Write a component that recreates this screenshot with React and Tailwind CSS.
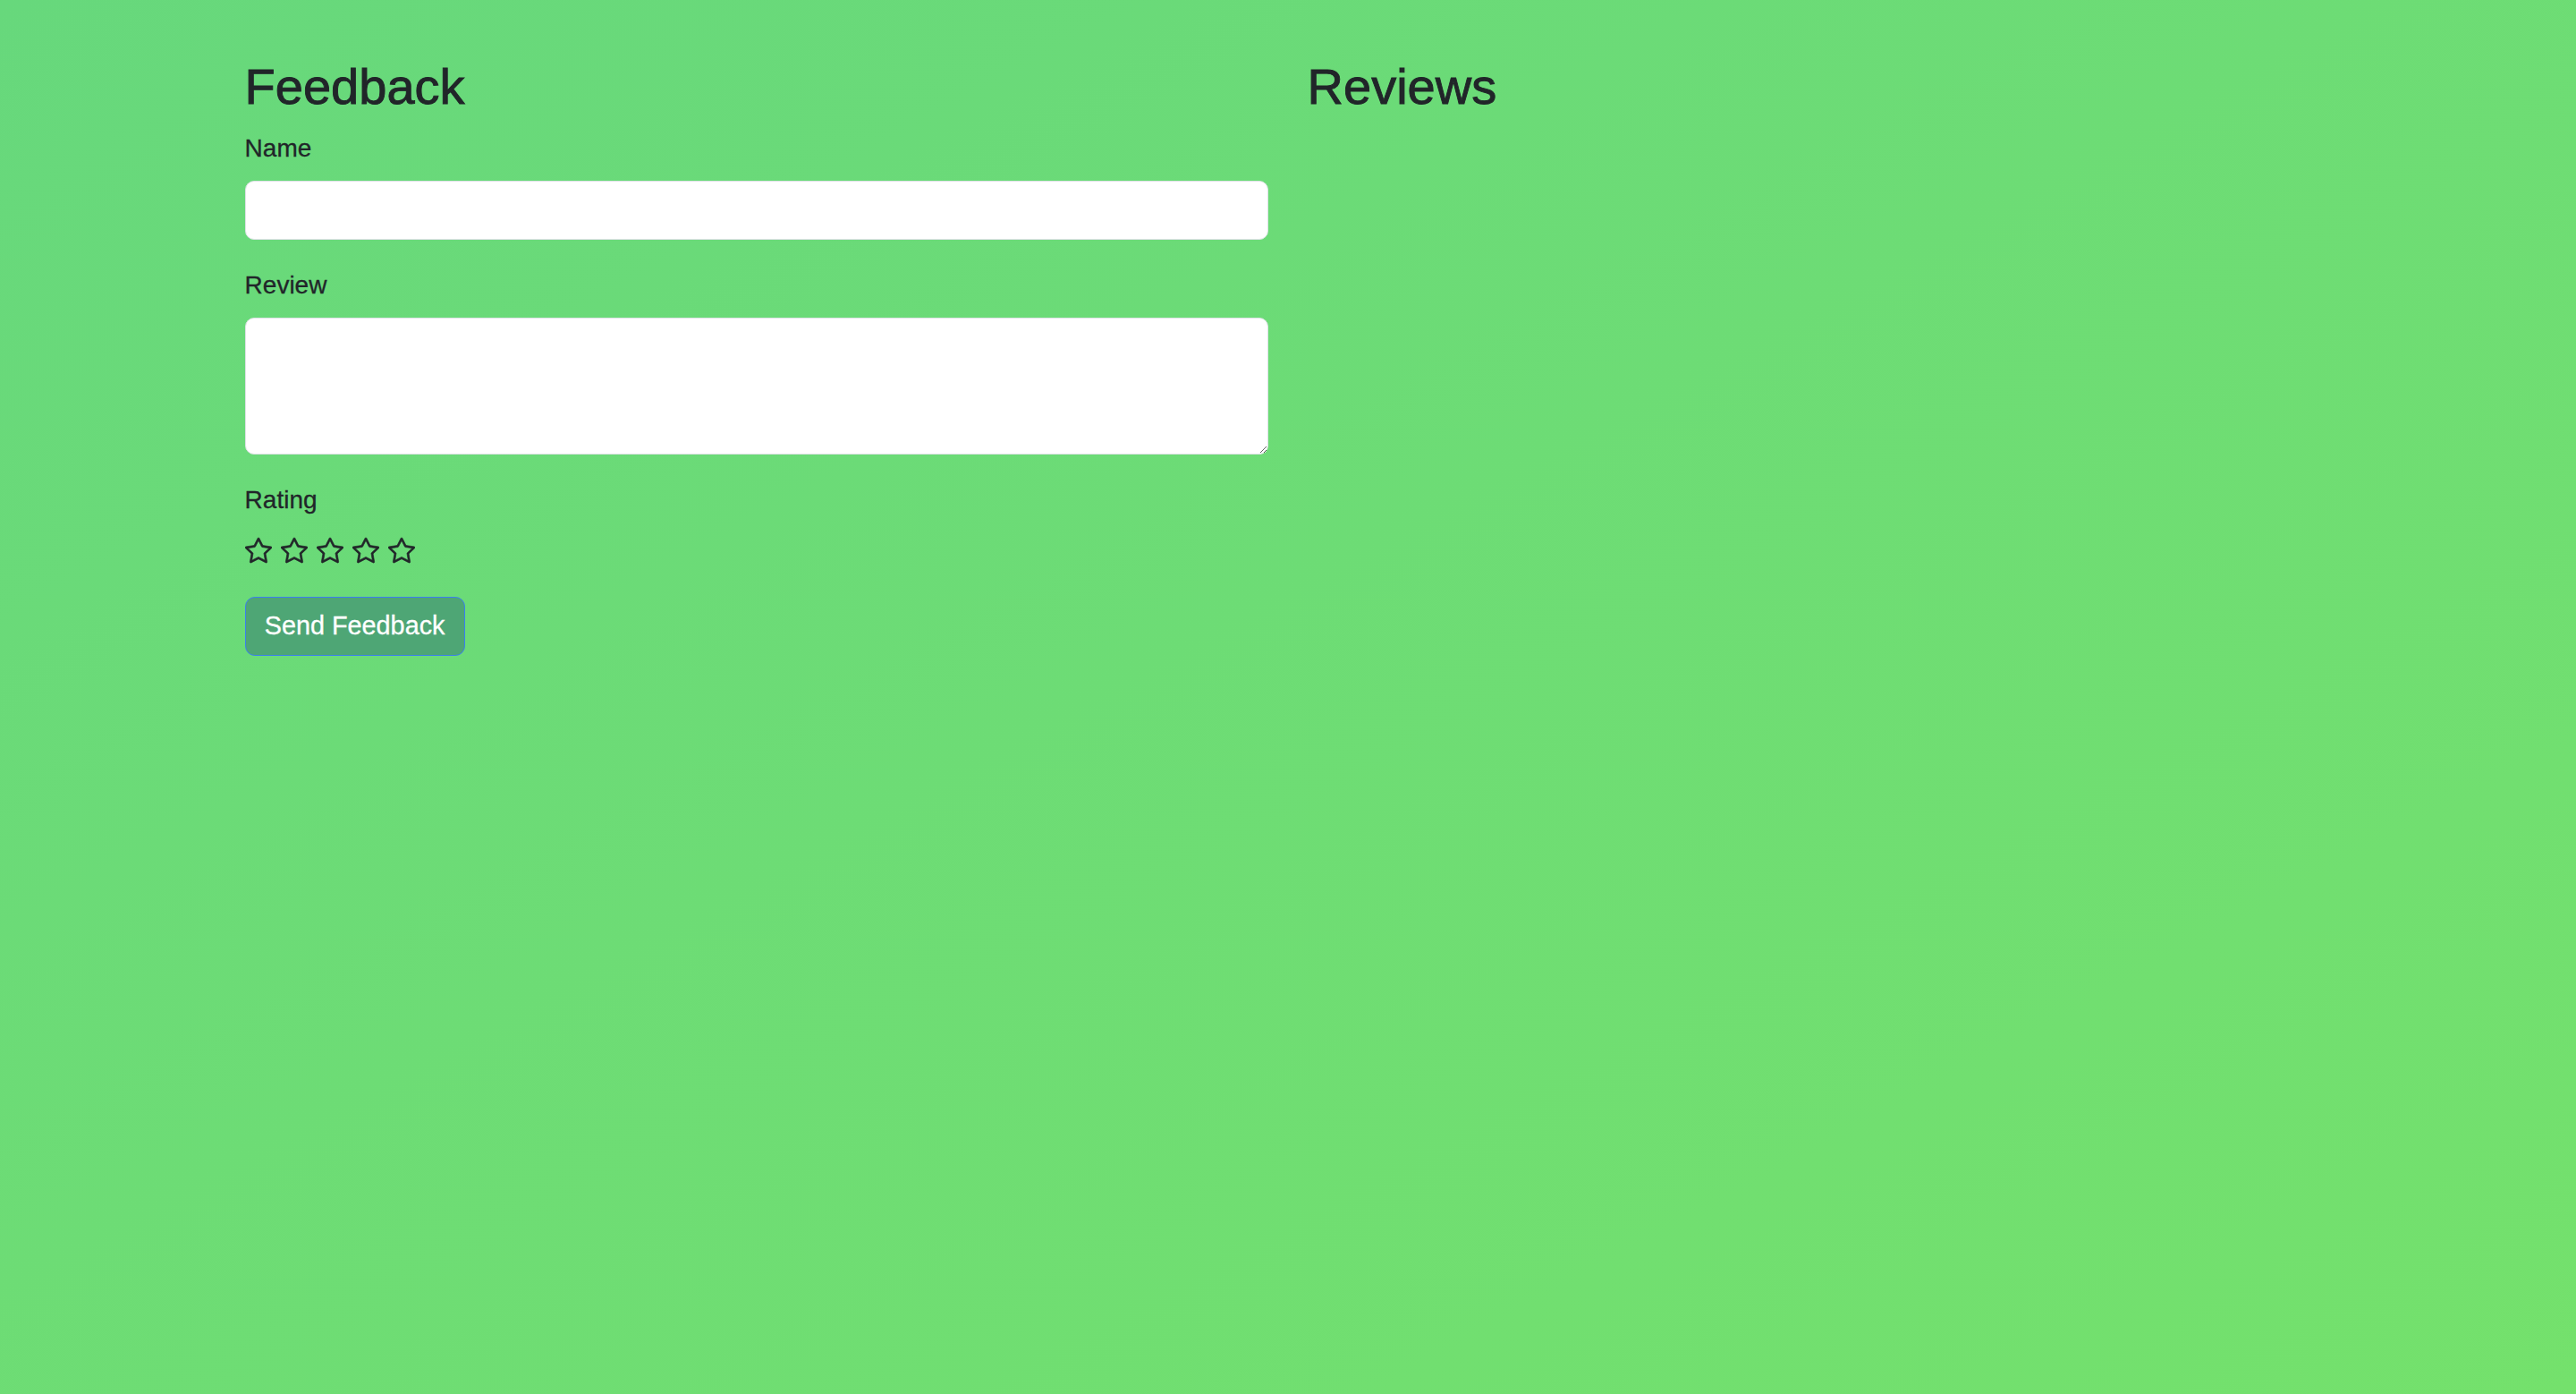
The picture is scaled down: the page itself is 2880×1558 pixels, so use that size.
import React, { useState } from 'react'

const font = { fontFamily: '"Liberation Sans", Arial, sans-serif' }

function StarIcon() {
    return (
        <svg width="30" height="30" viewBox="0 0 16 16" fill="#212529" stroke="#212529" strokeWidth="0.35" strokeLinejoin="round">
            <path d="M2.866 14.85c-.078.444.36.791.746.593l4.39-2.256 4.389 2.256c.386.198.824-.149.746-.592l-.83-4.73 3.522-3.356c.33-.314.16-.888-.282-.95l-4.898-.696L8.465.792a.513.513 0 0 0-.927 0L5.354 5.12l-4.898.696c-.441.062-.612.636-.283.95l3.523 3.356-.83 4.73zm4.905-2.767-3.686 1.894.694-3.957a.565.565 0 0 0-.163-.505L1.71 6.745l4.052-.576a.525.525 0 0 0 .393-.288L8 2.223l1.847 3.658a.525.525 0 0 0 .393.288l4.052.575-2.906 2.77a.565.565 0 0 0-.163.506l.694 3.957-3.686-1.894a.503.503 0 0 0-.461 0z" />
        </svg>
    )
}

export default function App() {
    const [name, setName] = useState('')
    const [review, setReview] = useState('')

    return (
        <div
            className="h-screen overflow-hidden w-full bg-linear-to-br from-[#67d87c] to-[#74e16c] text-[#212529] font-['Liberation_Sans',Arial,sans-serif]"
        >
            <div className="mx-auto w-[2376px] flex pt-[62px]">
                {/* feedback form */}
                <div className="w-1/2 px-[21.6px]">
                    <h2 className="text-[56px] leading-[69px] mb-[14px] [-webkit-text-stroke:0.9px_#212529]">Feedback</h2>
                    <form onSubmit={e => e.preventDefault()}>
                        <label className="block text-[28px] leading-[42px] mb-[15px] [-webkit-text-stroke:0.3px_#212529]">Name</label>
                        <input
                            type="text"
                            value={name}
                            onChange={e => setName(e.target.value)}
                            className="block w-full h-[66px] bg-white border-[1.8px] border-[#dee2e6] rounded-[10px] px-[21px] text-[28.8px] outline-none mb-[30px]"
                        />

                        <label className="block text-[28px] leading-[42px] mb-[15px] [-webkit-text-stroke:0.3px_#212529]">Review</label>
                        <textarea
                            value={review}
                            onChange={e => setReview(e.target.value)}
                            className="block w-full h-[153px] bg-white border-[1.8px] border-[#dee2e6] rounded-[10px] px-[21px] py-[10px] text-[28.8px] outline-none resize-y mb-[30px]"
                        />

                        <label className="block text-[28px] leading-[42px] [-webkit-text-stroke:0.3px_#212529]">Rating</label>
                        <div className="flex gap-[10px] mt-[20px] mb-[37px]">
                            {[1, 2, 3, 4, 5].map(i => (
                                <StarIcon key={i} />
                            ))}
                        </div>

                        <button
                            type="submit"
                            className="h-[66px] w-[246px] bg-[#4ea675] border-[1.8px] border-[#3b7ff0] rounded-[10.8px] text-white text-[28.8px] [-webkit-text-stroke:0.3px_#ffffff]"
                            style={font}
                        >
                            Send Feedback
                        </button>
                    </form>
                </div>

                {/* reviews list */}
                <div className="w-1/2 px-[21.6px]">
                    <h2 className="text-[56px] leading-[69px] mb-[14px] [-webkit-text-stroke:0.9px_#212529]">Reviews</h2>
                </div>
            </div>
        </div>
    )
}
